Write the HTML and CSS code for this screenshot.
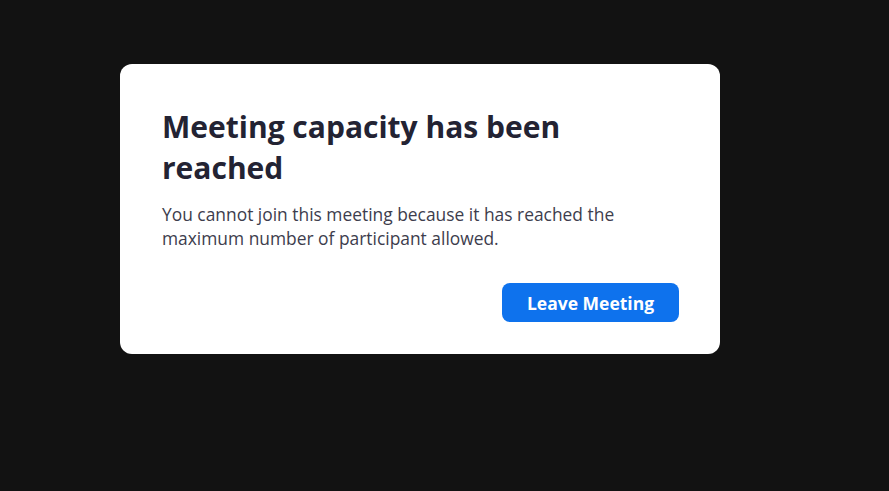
FILE: index.html
```html
<!DOCTYPE html>
<html lang="en">
<head>
<meta charset="utf-8">
<link rel="stylesheet" href="styles.css">
</head>
<body>
<div class="page">
  <div class="dialog">
    <h1 class="title">Meeting capacity has been reached</h1>
    <p class="message">You cannot join this meeting because it has reached the maximum number of participant allowed.</p>
    <div class="actions">
      <button class="btn">Leave Meeting</button>
    </div>
  </div>
</div>
</body>
</html>
```
FILE: styles.css
```css
html, body {
  margin: 0;
  padding: 0;
  height: 100%;
  background: #121212;
}
.page {
  padding: 64px 0 0 120px;
  font-family: "Open Sans", sans-serif;
}
.dialog {
  width: 600px;
  height: 290px;
  box-sizing: border-box;
  background: #ffffff;
  border-radius: 12px;
  padding: 42px 41px 32px 42px;
  display: flex;
  flex-direction: column;
}
.title {
  margin: 0;
  font-size: 30px;
  line-height: 41px;
  font-weight: 700;
  color: #232333;
}
.message {
  margin: 14px 0 0;
  font-size: 17.4px;
  line-height: 24px;
  color: #3d3d4d;
}
.actions {
  margin-top: auto;
  display: flex;
  justify-content: flex-end;
}
.btn {
  width: 177px;
  height: 39px;
  border: none;
  border-radius: 8px;
  background: #0e72ed;
  color: #ffffff;
  font-family: "Open Sans", sans-serif;
  font-size: 17.5px;
  font-weight: 700;
}
```
